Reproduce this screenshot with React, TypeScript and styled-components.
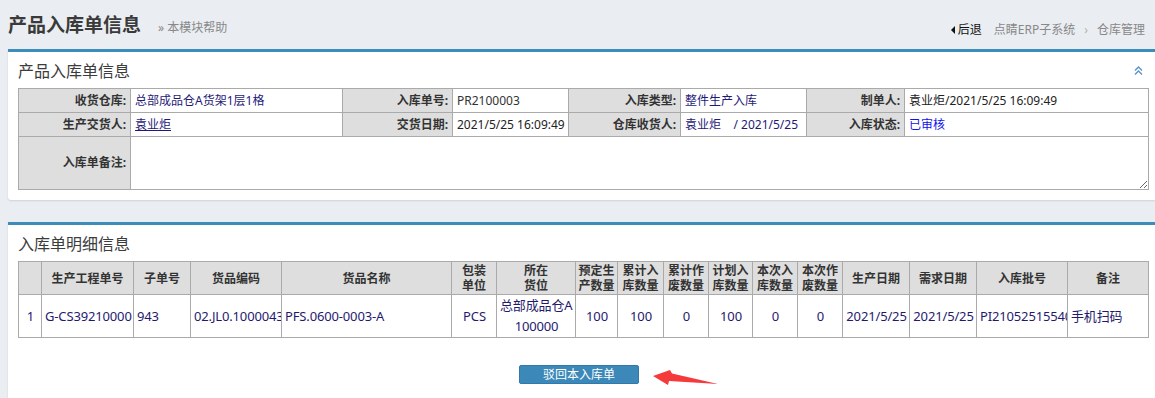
import React from 'react'
import styled, { createGlobalStyle } from 'styled-components'

const GlobalStyle = createGlobalStyle`
  html, body {
    margin: 0;
    padding: 0;
  }
  body {
    background: #eaedf1;
    font-family: "Noto Sans", "Noto Sans CJK SC", sans-serif;
    font-size: 12px;
    color: #333;
    overflow: hidden;
  }
`

const Page = styled.div`
  padding-left: 8px;
`

const PageHeader = styled.div`
  display: flex;
  justify-content: space-between;
  align-items: flex-start;
  height: 49px;
  padding-right: 10px;
`

const TitleGroup = styled.div`
  display: flex;
  align-items: baseline;
  padding-top: 11px;
`

const PageTitle = styled.h1`
  margin: 0;
  font-size: 19px;
  line-height: 28px;
  font-weight: bold;
  color: #3a3a3a;
`

const HelpLink = styled.a`
  margin-left: 17px;
  font-size: 12px;
  color: #888;
  text-decoration: none;
`

const Crumbs = styled.div`
  display: flex;
  align-items: center;
  padding-top: 22px;
  font-size: 12px;
  line-height: 16px;
  color: #888;
`

const BackLink = styled.a`
  display: flex;
  align-items: center;
  margin-right: 12px;
  color: #111;

  &::before {
    content: '';
    width: 0;
    height: 0;
    margin-right: 3px;
    border-top: 4px solid transparent;
    border-bottom: 4px solid transparent;
    border-right: 4px solid #111;
  }
`

const CrumbSep = styled.span`
  margin: 0 9px;
  color: #b0b0b0;
`

const Panel = styled.section<{ $fill?: boolean }>`
  background: #fff;
  border-top: 3px solid #3d8dbb;
  border-radius: 0 0 0 3px;
  box-shadow: 0 1px 2px rgba(0, 0, 0, 0.12);
  padding: 0 7px 10px 10px;
  margin-bottom: 22px;
  min-height: ${(p) => (p.$fill ? '200px' : 'auto')};
`

const PanelHead = styled.div`
  display: flex;
  justify-content: space-between;
  align-items: center;
  height: 36px;
`

const PanelTitle = styled.h2`
  margin: 0;
  font-size: 16px;
  font-weight: normal;
  color: #3c3c3c;
`

const Collapse = styled.a`
  display: flex;
  margin-right: 5px;
  cursor: pointer;
`

const FormTable = styled.table`
  width: 100%;
  border-collapse: collapse;
  table-layout: fixed;

  td {
    border: 1px solid #aaa;
    height: 23px;
    padding: 0 4px;
    white-space: nowrap;
    overflow: hidden;
    line-height: 16px;
  }
`

const Label = styled.td<{ $tall?: boolean }>`
  background: #dedede;
  text-align: right;
  font-weight: bold;
  color: #333;
  && {
    height: ${(p) => (p.$tall ? '52px' : '23px')};
  }
`

const tones = {
  navy: '#1f1a78',
  plain: '#333',
  dark: '#222',
  blue: '#1010f0',
}

const Value = styled.td<{ $tone?: keyof typeof tones }>`
  color: ${(p) => tones[p.$tone || 'navy']};
`

const NoteCell = styled.td`
  && {
    padding: 0;
  }
`

const UserLink = styled.a`
  color: #1f1a78;
  text-decoration: underline;
`

const Note = styled.textarea`
  display: block;
  width: 100%;
  height: 52px;
  box-sizing: border-box;
  border: 0;
  padding: 2px 4px;
  resize: vertical;
  font-family: inherit;
  font-size: 12px;
  outline: none;
`

const GridTable = styled.table`
  width: 100%;
  border-collapse: collapse;
  table-layout: fixed;

  th,
  td {
    border: 1px solid #aaa;
    overflow: hidden;
  }
`

const HeadCell = styled.th`
  height: 32px;
  padding: 0 2px;
  background: #dedede;
  font-size: 12px;
  line-height: 15px;
  font-weight: bold;
  text-align: center;
  color: #333;
`

const Cell = styled.td<{ $align?: 'left' | 'center' }>`
  height: 42px;
  padding: 0 2px 0 3px;
  text-align: ${(p) => p.$align || 'center'};
  white-space: nowrap;
  font-size: 13px;
  letter-spacing: -0.15px;
  line-height: 21px;
  color: #1f1a6e;
`

const Clip = styled.div`
  overflow: hidden;
  white-space: nowrap;
`

const Actions = styled.div`
  position: relative;
  display: flex;
  justify-content: center;
  padding: 27px 8px 0 0;
`

const ActionWrap = styled.div`
  position: relative;
`

const RejectButton = styled.button`
  width: 120px;
  height: 19px;
  padding: 0;
  border: 1px solid #2f7aab;
  border-radius: 2px;
  background: #3b88b9;
  color: #fff;
  font-family: inherit;
  font-size: 12px;
  line-height: 16px;
  cursor: pointer;
`

const Pointer = styled.svg`
  position: absolute;
  left: 133px;
  top: 3px;
`

const columns: { title: React.ReactNode; width: number; align?: 'left' | 'center' }[] = [
  { title: '', width: 23 },
  { title: '生产工程单号', width: 92, align: 'left' },
  { title: '子单号', width: 57, align: 'left' },
  { title: '货品编码', width: 91, align: 'left' },
  { title: '货品名称', width: 170, align: 'left' },
  { title: <>包装<br />单位</>, width: 45 },
  { title: <>所在<br />货位</>, width: 79 },
  { title: <>预定生<br />产数量</>, width: 42 },
  { title: <>累计入<br />库数量</>, width: 46 },
  { title: <>累计作<br />废数量</>, width: 45 },
  { title: <>计划入<br />库数量</>, width: 44 },
  { title: <>本次入<br />库数量</>, width: 45 },
  { title: <>本次作<br />废数量</>, width: 45 },
  { title: '生产日期', width: 67 },
  { title: '需求日期', width: 67 },
  { title: '入库批号', width: 91, align: 'left' },
  { title: '备注', width: 81, align: 'left' },
]

const row: React.ReactNode[] = [
  '1',
  'G-CS39210000',
  '943',
  '02.JL0.1000043',
  'PFS.0600-0003-A',
  'PCS',
  <>
    <Clip>总部成品仓A货架1层1格</Clip>
    100000
  </>,
  '100',
  '100',
  '0',
  '100',
  '0',
  '0',
  '2021/5/25',
  '2021/5/25',
  'PI210525155401',
  '手机扫码',
]

const CollapseIcon = () => (
  <svg width="9" height="9" viewBox="0 0 9 9" fill="none" stroke="#5b93c7" strokeWidth="1.4">
    <polyline points="1,4.5 4.5,1 8,4.5" />
    <polyline points="1,8.5 4.5,5 8,8.5" />
  </svg>
)

const App: React.FC = () => {
  return (
    <>
      <GlobalStyle />
      <Page>
        <PageHeader>
          <TitleGroup>
            <PageTitle>产品入库单信息</PageTitle>
            <HelpLink href="#">» 本模块帮助</HelpLink>
          </TitleGroup>
          <Crumbs>
            <BackLink>后退</BackLink>
            <span>点睛ERP子系统</span>
            <CrumbSep>›</CrumbSep>
            <span>仓库管理</span>
          </Crumbs>
        </PageHeader>

        <Panel>
          <PanelHead>
            <PanelTitle>产品入库单信息</PanelTitle>
            <Collapse>
              <CollapseIcon />
            </Collapse>
          </PanelHead>
          <FormTable>
            <colgroup>
              <col style={{ width: 112 }} />
              <col style={{ width: 212 }} />
              <col style={{ width: 110 }} />
              <col style={{ width: 116 }} />
              <col style={{ width: 112 }} />
              <col style={{ width: 126 }} />
              <col style={{ width: 98 }} />
              <col style={{ width: 244 }} />
            </colgroup>
            <tbody>
              <tr>
                <Label>收货仓库:</Label>
                <Value>总部成品仓A货架1层1格</Value>
                <Label>入库单号:</Label>
                <Value $tone="plain">PR2100003</Value>
                <Label>入库类型:</Label>
                <Value>整件生产入库</Value>
                <Label>制单人:</Label>
                <Value $tone="dark">袁业炬/2021/5/25 16:09:49</Value>
              </tr>
              <tr>
                <Label>生产交货人:</Label>
                <Value>
                  <UserLink>袁业炬</UserLink>
                </Value>
                <Label>交货日期:</Label>
                <Value $tone="dark">2021/5/25 16:09:49</Value>
                <Label>仓库收货人:</Label>
                <Value>袁业炬&nbsp;&nbsp;&nbsp;&nbsp;/ 2021/5/25</Value>
                <Label>入库状态:</Label>
                <Value $tone="blue">已审核</Value>
              </tr>
              <tr>
                <Label $tall>入库单备注:</Label>
                <NoteCell colSpan={7}>
                  <Note defaultValue="" />
                </NoteCell>
              </tr>
            </tbody>
          </FormTable>
        </Panel>

        <Panel $fill>
          <PanelHead>
            <PanelTitle>入库单明细信息</PanelTitle>
          </PanelHead>
          <GridTable>
            <colgroup>
              {columns.map((c, i) => (
                <col key={i} style={{ width: c.width }} />
              ))}
            </colgroup>
            <thead>
              <tr>
                {columns.map((c, i) => (
                  <HeadCell key={i}>{c.title}</HeadCell>
                ))}
              </tr>
            </thead>
            <tbody>
              <tr>
                {row.map((v, i) => (
                  <Cell key={i} $align={columns[i].align}>
                    {v}
                  </Cell>
                ))}
              </tr>
            </tbody>
          </GridTable>
          <Actions>
            <ActionWrap>
              <RejectButton>驳回本入库单</RejectButton>
              <Pointer width="68" height="18" viewBox="0 0 68 18">
                <polygon points="1,8 18,2 20,5.5 66,16 17,13 16,17" fill="#f43a3a" />
              </Pointer>
            </ActionWrap>
          </Actions>
        </Panel>
      </Page>
    </>
  )
}

export default App
